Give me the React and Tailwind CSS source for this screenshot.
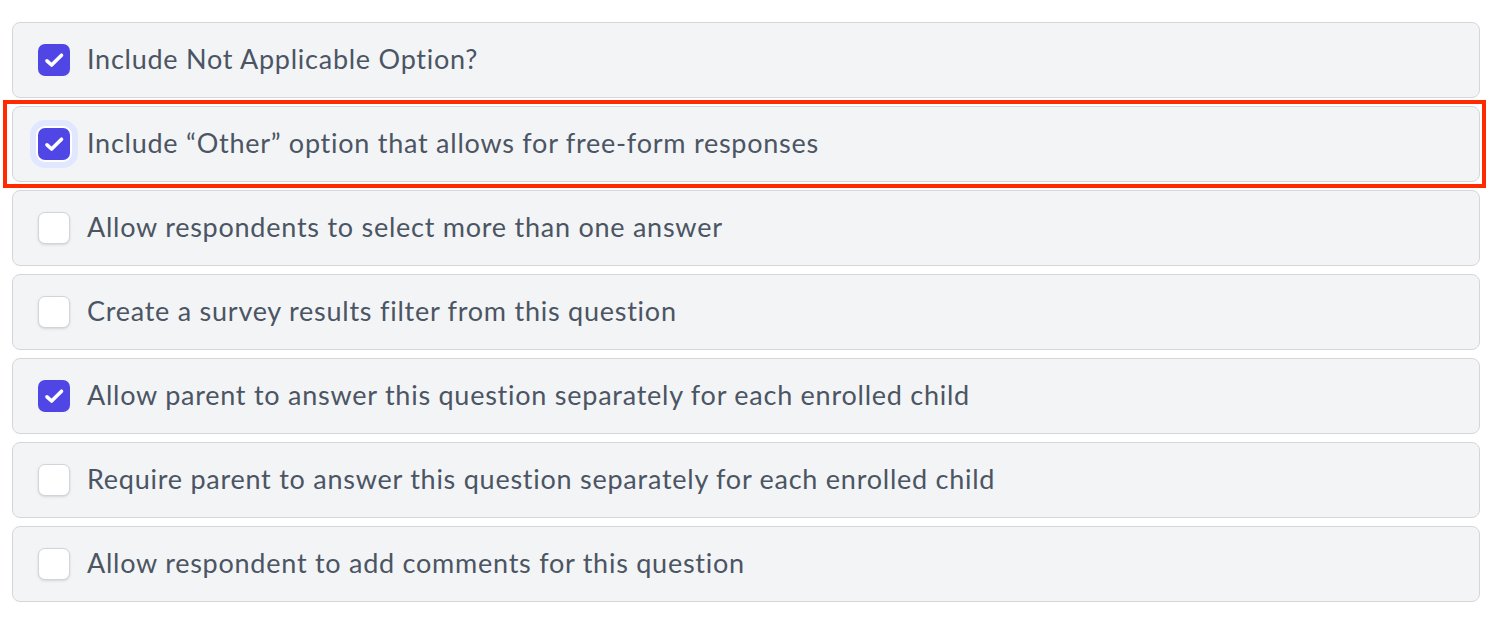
import React from "react";

const items = [
  { label: "Include Not Applicable Option?", checked: true },
  { label: "Include \u201COther\u201D option that allows for free-form responses", checked: true, focused: true },
  { label: "Allow respondents to select more than one answer", checked: false },
  { label: "Create a survey results filter from this question", checked: false },
  { label: "Allow parent to answer this question separately for each enrolled child", checked: true },
  { label: "Require parent to answer this question separately for each enrolled child", checked: false },
  { label: "Allow respondent to add comments for this question", checked: false },
];

function Box({ checked, focused }) {
  if (!checked) {
    return (
      <span className="w-8 h-8 shrink-0 rounded-[7px] bg-white border-[1.5px] border-[#d1d5db] shadow-sm" />
    );
  }
  return (
    <span
      className={
        "w-8 h-8 shrink-0 rounded-[7px] bg-[#4f46e5] flex items-center justify-center " +
        (focused ? "ring-[6px] ring-[#e0e7ff] ring-offset-2 ring-offset-white" : "")
      }
    >
      <svg width="32" height="32" viewBox="0 0 32 32" fill="none">
        <path d="M9 16.8l4.6 4.2L23.5 11.2" stroke="white" strokeWidth="3.6" strokeLinecap="round" strokeLinejoin="round" />
      </svg>
    </span>
  );
}

export default function App() {
  return (
    <div className="relative w-[1496px] h-[620px] bg-white pt-[22px] pl-3 pr-4" style={{ fontFamily: "Lato, 'Noto Sans', sans-serif" }}>
      <div className="flex flex-col gap-2">
        {items.map((it, i) => (
          <div key={i} className="h-[76px] rounded-lg border border-[#d4d6dc] bg-[#f3f4f6] flex items-center pl-[25px] gap-[17px]">
            <Box checked={it.checked} focused={it.focused} />
            <span className="text-[27px] tracking-[0.75px] text-[#4b5563] leading-none pb-[3px]">{it.label}</span>
          </div>
        ))}
      </div>
      <div className="absolute left-[3px] top-[100px] w-[1483px] h-[88px] border-4 border-[#ff2a00] pointer-events-none" />
    </div>
  );
}
